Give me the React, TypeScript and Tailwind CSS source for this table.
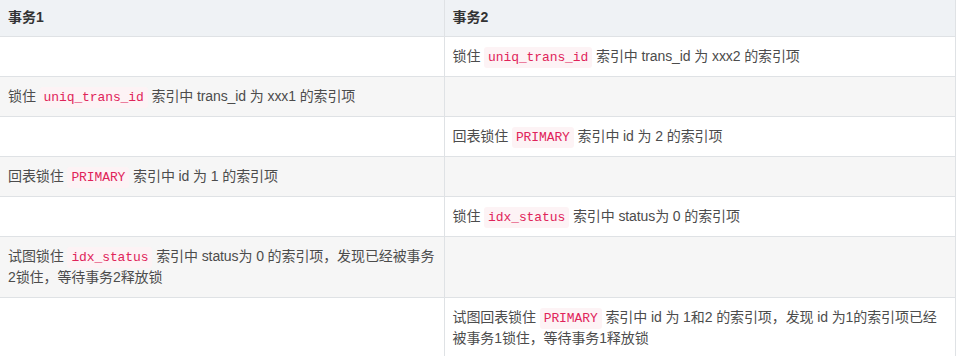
import React from "react";

type Cell = React.ReactNode;

function Code({ children }: { children: React.ReactNode }) {
  return (
    <code className="rounded-[3px] bg-[#fdf3f5] px-[4px] py-[3px] font-['Liberation_Mono',monospace] text-[13px] leading-none text-[#e0245a]">
      {children}
    </code>
  );
}

const rows: [Cell, Cell][] = [
  [
    null,
    <>
      锁住 <Code>uniq_trans_id</Code> 索引中 trans_id 为 xxx2 的索引项
    </>,
  ],
  [
    <>
      锁住 <Code>uniq_trans_id</Code> 索引中 trans_id 为 xxx1 的索引项
    </>,
    null,
  ],
  [
    null,
    <>
      回表锁住 <Code>PRIMARY</Code> 索引中 id 为 2 的索引项
    </>,
  ],
  [
    <>
      回表锁住 <Code>PRIMARY</Code> 索引中 id 为 1 的索引项
    </>,
    null,
  ],
  [
    null,
    <>
      锁住 <Code>idx_status</Code> 索引中 status为 0 的索引项
    </>,
  ],
  [
    <>
      试图锁住 <Code>idx_status</Code> 索引中 status为 0 的索引项，发现已经被事务
      <br />
      2锁住，等待事务2释放锁
    </>,
    null,
  ],
  [
    null,
    <>
      试图回表锁住 <Code>PRIMARY</Code> 索引中 id 为 1和2 的索引项，发现 id 为1的索引项已经
      <br />
      被事务1锁住，等待事务1释放锁
    </>,
  ],
];

export default function App() {
  return (
    <div className="h-[356px] w-[956px] overflow-hidden bg-white font-['Liberation_Sans','Noto_Sans_CJK_SC',sans-serif] text-[14px] text-[#4c4c4c]">
      <table className="w-[956px] table-fixed border-collapse">
        <colgroup>
          <col className="w-[444px]" />
          <col />
        </colgroup>
        <thead>
          <tr className="h-[36px] bg-[#eff2f5]">
            <th className="border-r border-b border-[#dfe2e5] px-2 text-left font-bold text-[#333]">
              事务1
            </th>
            <th className="border-r border-b border-[#dfe2e5] px-2 text-left font-bold text-[#333]">
              事务2
            </th>
          </tr>
        </thead>
        <tbody>
          {rows.map(([a, b], i) => (
            <tr key={i} className={i % 2 === 1 ? "bg-[#f6f6f6]" : "bg-white"}>
              <td className="whitespace-nowrap border-r border-b border-[#dfe2e5] px-2 py-[9px] align-middle leading-[21px] tracking-[-0.1px]">
                {a ?? <span>&nbsp;</span>}
              </td>
              <td className="whitespace-nowrap border-r border-b border-[#dfe2e5] px-2 py-[9px] align-middle leading-[21px] tracking-[-0.1px]">
                {b ?? <span>&nbsp;</span>}
              </td>
            </tr>
          ))}
        </tbody>
      </table>
    </div>
  );
}
